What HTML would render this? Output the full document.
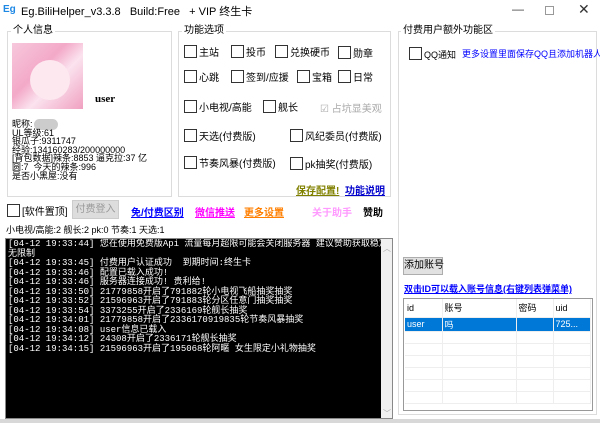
<!DOCTYPE html><html><head><meta charset="utf-8"><style>
*{margin:0;padding:0;box-sizing:border-box}
body{width:600px;height:423px;background:#fff;position:relative;overflow:hidden;font-family:"Liberation Sans","Noto Sans CJK SC",sans-serif;font-size:10px;color:#000}
.a{position:absolute;white-space:nowrap}
.g{position:absolute;border:1px solid #dcdcdc}
.gl{position:absolute;background:#fff;padding:0 2px;font-size:10px;line-height:12px}
.cb{position:absolute;white-space:nowrap;font-size:10px;line-height:13px}
.cb:before{content:"";display:inline-block;width:11px;height:11px;border:1px solid #333;vertical-align:-2px;margin-right:2px;background:#fff}
.lk{position:absolute;font-weight:bold;text-decoration:underline;font-size:10px;white-space:nowrap}
.con{position:absolute;left:5px;top:238px;width:388px;height:181px;background:#000;border:1px solid #888;color:#fff;font-family:"Liberation Mono","Noto Sans CJK SC",monospace;font-size:9px;line-height:9.5px;padding:1px 2px;overflow:hidden;white-space:nowrap}
td{border-right:1px solid #eee;border-bottom:1px solid #eee;height:12px;font-size:9px;padding-left:2px}
</style></head><body>
<div class="a" style="left:3px;top:4px;color:#1e88e5;font-size:10px;font-weight:bold">Eg</div>
<div class="a" style="left:21px;top:3px;font-size:11px">Eg.BiliHelper_v3.3.8&nbsp;&nbsp; Build:Free&nbsp;&nbsp; + VIP 终生卡</div>
<div class="a" style="left:512px;top:2px;font-size:12px;color:#444">—</div>
<div class="a" style="left:545px;top:6px;width:9px;height:9px;border:1px solid #999"></div>
<div class="a" style="left:578px;top:1px;font-size:14px;color:#333">✕</div>

<div class="g" style="left:7px;top:31px;width:165px;height:166px"></div>
<div class="gl" style="left:11px;top:25px">个人信息</div>
<div class="a" style="left:12px;top:43px;width:71px;height:66px;background:linear-gradient(135deg,#f7c8dc 0%,#f3a9c8 40%,#fbe3ee 60%,#f0a0c0 100%)"></div>
<div class="a" style="left:30px;top:60px;width:40px;height:40px;border-radius:50%;background:#fde8ef"></div>
<div class="a" style="left:95px;top:93px;font-weight:bold;font-family:'Liberation Serif',serif;font-size:11px">user</div>
<div class="a" style="left:34px;top:119px;width:24px;height:11px;border-radius:6px;background:#ccc"></div>
<div class="a" style="left:12px;top:120px;font-size:9px;line-height:8.6px">昵称:<br>UL等级:61<br>银瓜子:9311747<br>经验:134160283/200000000<br>[背包数据]辣条:8853 逼克拉:37 亿<br>圆:7&nbsp; 今天的辣条:996<br>是否小黑屋:没有</div>

<div class="g" style="left:178px;top:31px;width:213px;height:166px"></div>
<div class="gl" style="left:182px;top:25px">功能选项</div>
<div class="cb" style="left:184px;top:45px">主站</div>
<div class="cb" style="left:231px;top:45px">投币</div>
<div class="cb" style="left:275px;top:45px">兑换硬币</div>
<div class="cb" style="left:338px;top:46px">勋章</div>
<div class="cb" style="left:184px;top:70px">心跳</div>
<div class="cb" style="left:231px;top:70px">签到/应援</div>
<div class="cb" style="left:297px;top:70px">宝箱</div>
<div class="cb" style="left:338px;top:70px">日常</div>
<div class="cb" style="left:184px;top:100px">小电视/高能</div>
<div class="cb" style="left:263px;top:100px">舰长</div>
<div class="a" style="left:320px;top:100px;color:#aaa">☑ 占坑显美观</div>
<div class="cb" style="left:184px;top:129px">天选(付费版)</div>
<div class="cb" style="left:290px;top:129px">风纪委员(付费版)</div>
<div class="cb" style="left:184px;top:156px">节奏风暴(付费版)</div>
<div class="cb" style="left:290px;top:157px">pk抽奖(付费版)</div>
<div class="lk" style="left:296px;top:182px;color:#808000">保存配置!</div>
<div class="lk" style="left:345px;top:182px;color:#00c">功能说明</div>

<div class="g" style="left:398px;top:31px;width:199px;height:384px"></div>
<div class="gl" style="left:401px;top:25px">付费用户额外功能区</div>
<div class="cb" style="left:409px;top:47px;font-size:9px">QQ通知</div>
<div class="a" style="left:462px;top:47px;color:#00f;font-size:9px">更多设置里面保存QQ且添加机器人</div>

<div class="cb" style="left:7px;top:204px">[软件置顶]</div>
<div class="a" style="left:72px;top:200px;width:47px;height:19px;background:#ddd;border:1px solid #ccc;color:#999;text-align:center;line-height:17px">付费登入</div>
<div class="lk" style="left:131px;top:204px;color:#00f">免/付费区别</div>
<div class="lk" style="left:195px;top:204px;color:#f0f">微信推送</div>
<div class="lk" style="left:244px;top:204px;color:#ff7f00">更多设置</div>
<div class="lk" style="left:312px;top:204px;color:#f9f;text-decoration:none">关于助手</div>
<div class="lk" style="left:363px;top:204px;color:#000;text-decoration:none">赞助</div>
<div class="a" style="left:6px;top:223px;font-size:9px">小电视/高能:2 舰长:2 pk:0 节奏:1 天选:1</div>

<div class="con">[04-12 19:33:44] 您在使用免费版Api 流量每月超限可能会关闭服务器 建议赞助获取稳定版<br>无限制<br>[04-12 19:33:45] 付费用户认证成功&nbsp; 到期时间:终生卡<br>[04-12 19:33:46] 配置已载入成功!<br>[04-12 19:33:46] 服务器连接成功! 贵利给!<br>[04-12 19:33:50] 21779858开启了791882轮小电视飞船抽奖抽奖<br>[04-12 19:33:52] 21596963开启了791883轮分区任意门抽奖抽奖<br>[04-12 19:33:54] 3373255开启了2336169轮舰长抽奖<br>[04-12 19:34:01] 21779858开启了2336170919835轮节奏风暴抽奖<br>[04-12 19:34:08] user信息已载入<br>[04-12 19:34:12] 24308开启了2336171轮舰长抽奖<br>[04-12 19:34:15] 21596963开启了195068轮阿暱 女生限定小礼物抽奖</div>
<div class="a" style="left:381px;top:239px;width:11px;height:179px;background:#f0f0f0"></div>
<div class="a" style="left:383px;top:243px;color:#aaa;font-size:8px">︿</div>
<div class="a" style="left:383px;top:408px;color:#aaa;font-size:8px">﹀</div>

<div class="a" style="left:403px;top:257px;width:40px;height:18px;background:#e1e1e1;border:1px solid #adadad;line-height:16px;text-align:center">添加账号</div>
<div class="lk" style="left:404px;top:282px;color:#00f;font-size:9px">双击ID可以载入账号信息(右键列表弹菜单)</div>
<div class="a" style="left:403px;top:298px;width:190px;height:113px;border:1px solid #999;background:#fff">
<table style="border-collapse:collapse;width:186px;margin-left:1px;table-layout:fixed">
<tr style="height:18px"><td style="width:37px">id</td><td style="width:74px">账号</td><td style="width:37px">密码</td><td>uid</td></tr>
<tr style="background:#0078d7;color:#fff"><td>user</td><td>吗</td><td></td><td>725...</td></tr>
<tr><td></td><td></td><td></td><td></td></tr><tr><td></td><td></td><td></td><td></td></tr><tr><td></td><td></td><td></td><td></td></tr><tr><td></td><td></td><td></td><td></td></tr><tr><td></td><td></td><td></td><td></td></tr><tr><td></td><td></td><td></td><td></td></tr>
</table></div>
<div class="a" style="left:0;top:419px;width:600px;height:4px;background:#d8d8d8"></div>
</body></html>
